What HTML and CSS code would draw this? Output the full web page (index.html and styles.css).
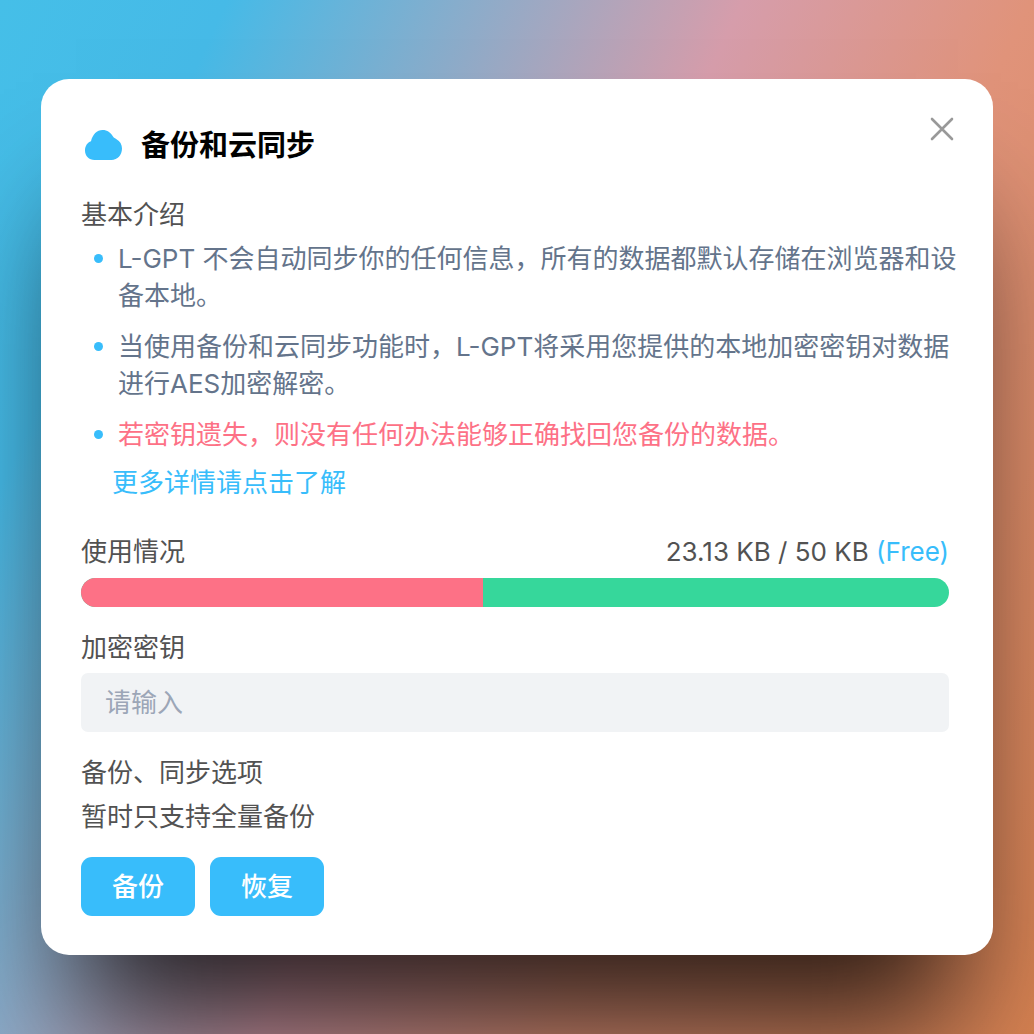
FILE: index.html
```html
<!DOCTYPE html>
<html lang="zh-CN">
<head>
<meta charset="utf-8">
<meta name="viewport" content="width=device-width, initial-scale=1">
<title>备份和云同步</title>
<link rel="stylesheet" href="styles.css">
</head>
<body>
<main class="card">
  <button class="close" type="button" aria-label="关闭">
    <svg viewBox="0 0 24 24" width="24" height="24" aria-hidden="true"><path d="M2 2L22 22M22 2L2 22" fill="none" stroke="currentColor" stroke-width="2.6" stroke-linecap="round"/></svg>
  </button>
  <header class="head">
    <svg class="cloud" viewBox="0 0 37 30" width="37" height="30" aria-hidden="true"><path d="M9.500 30C4 30 0 26 0 20.500C0 16 2.500 12.500 6 11.300C7.500 4.500 12 0 17.500 0C22.500 0 25.500 2.500 28 6.500C29 8 30 8.300 31.500 9.200C35 11 37 14.500 37 18.500C37 25 32.500 30 26.500 30Z" fill="currentColor"/></svg>
    <h1 class="title">备份和云同步</h1>
  </header>

  <section class="intro">
    <h2 class="label">基本介绍</h2>
    <ul class="points">
      <li>L-GPT 不会自动同步你的任何信息，所有的数据都默认存储在浏览器和设备本地。</li>
      <li>当使用备份和云同步功能时，L-GPT将采用您提供的本地加密密钥对数据进行AES加密解密。</li>
      <li class="warn">若密钥遗失，则没有任何办法能够正确找回您备份的数据。</li>
    </ul>
    <a class="more" href="#">更多详情请点击了解</a>
  </section>

  <section class="usage">
    <div class="usage-row">
      <h2 class="label">使用情况</h2>
      <span class="label">23.13 KB / 50 KB <span class="plan">(Free)</span></span>
    </div>
    <div class="bar"><div class="bar-used" style="width:46.26%"></div></div>
  </section>

  <div class="field">
    <label class="label" for="key">加密密钥</label>
    <input class="input" id="key" type="text" placeholder="请输入">
  </div>

  <section class="options">
    <h2 class="label">备份、同步选项</h2>
    <p class="label">暂时只支持全量备份</p>
  </section>

  <div class="actions">
    <button class="btn" type="button">备份</button>
    <button class="btn" type="button">恢复</button>
  </div>
</main>
</body>
</html>
```
FILE: styles.css
```css
* {
  box-sizing: border-box;
  margin: 0;
  padding: 0;
}

body {
  min-height: 100vh;
  padding: 41px;
  display: flex;
  align-items: center;
  font: 26px/37px Inter, "Noto Sans CJK SC", sans-serif;
  color: #525252;
  background: linear-gradient(115deg, #45bfe8 0%, #46bae7 15%, #d69dab 49%, #e0937a 68%, #d98352 100%);
}

.card {
  position: relative;
  flex: 1;
  min-width: 0;
  padding: 44px 44px 39px 40px;
  border-radius: 28px;
  background: #fff;
  box-shadow: 0 105px 120px -35px rgba(0, 0, 0, 0.8);
}

.close {
  position: absolute;
  top: 38px;
  right: 39px;
  width: 24px;
  height: 24px;
  border: 0;
  background: none;
  color: #999;
  cursor: pointer;
}

.close svg,
.cloud {
  display: block;
}

.head {
  display: flex;
  align-items: center;
  gap: 19px;
  padding-left: 4px;
  height: 44px;
  margin-bottom: 29px;
  color: #38bdfb;
}

.title {
  font-size: 29px;
  font-weight: 700;
  color: #000;
}

.label {
  font-size: 26px;
  font-weight: 400;
  line-height: 37px;
}

.points {
  list-style: none;
  margin: 7px -10px 0 0;
  padding-left: 37px;
  display: grid;
  gap: 14px;
  color: #64748b;
}

.points li::before {
  content: "";
  float: left;
  width: 9px;
  height: 9px;
  margin: 14px 0 0 -24px;
  border-radius: 50%;
  background: #38bdfb;
}

.points .warn {
  color: #fd7186;
}

.more {
  display: block;
  width: fit-content;
  margin: 11px 0 0 31px;
  color: #38bdfb;
  text-decoration: none;
}

.usage {
  margin-top: 32px;
}

.usage-row {
  display: flex;
  justify-content: space-between;
  margin-bottom: 8px;
}

.plan {
  color: #38bdfb;
}

.bar {
  height: 29px;
  border-radius: 15px;
  overflow: hidden;
  background: #36d79b;
}

.bar-used {
  height: 100%;
  background: #fd7186;
}

.field {
  display: grid;
  gap: 7px;
  margin-top: 22px;
}

.input {
  width: 100%;
  height: 59px;
  padding: 0 24px;
  border: 0;
  border-radius: 7px;
  background: #f1f3f5;
  color: #525252;
  font: inherit;
}

.input::placeholder {
  color: #9ca6b7;
  opacity: 1;
}

.options {
  display: grid;
  gap: 7px;
  margin-top: 22px;
}

.actions {
  display: flex;
  gap: 15px;
  margin-top: 22px;
}

.btn {
  width: 114px;
  height: 59px;
  border: 0;
  border-radius: 11px;
  background: #38bdfb;
  color: #fff;
  font: inherit;
  font-weight: 500;
  cursor: pointer;
}
```
